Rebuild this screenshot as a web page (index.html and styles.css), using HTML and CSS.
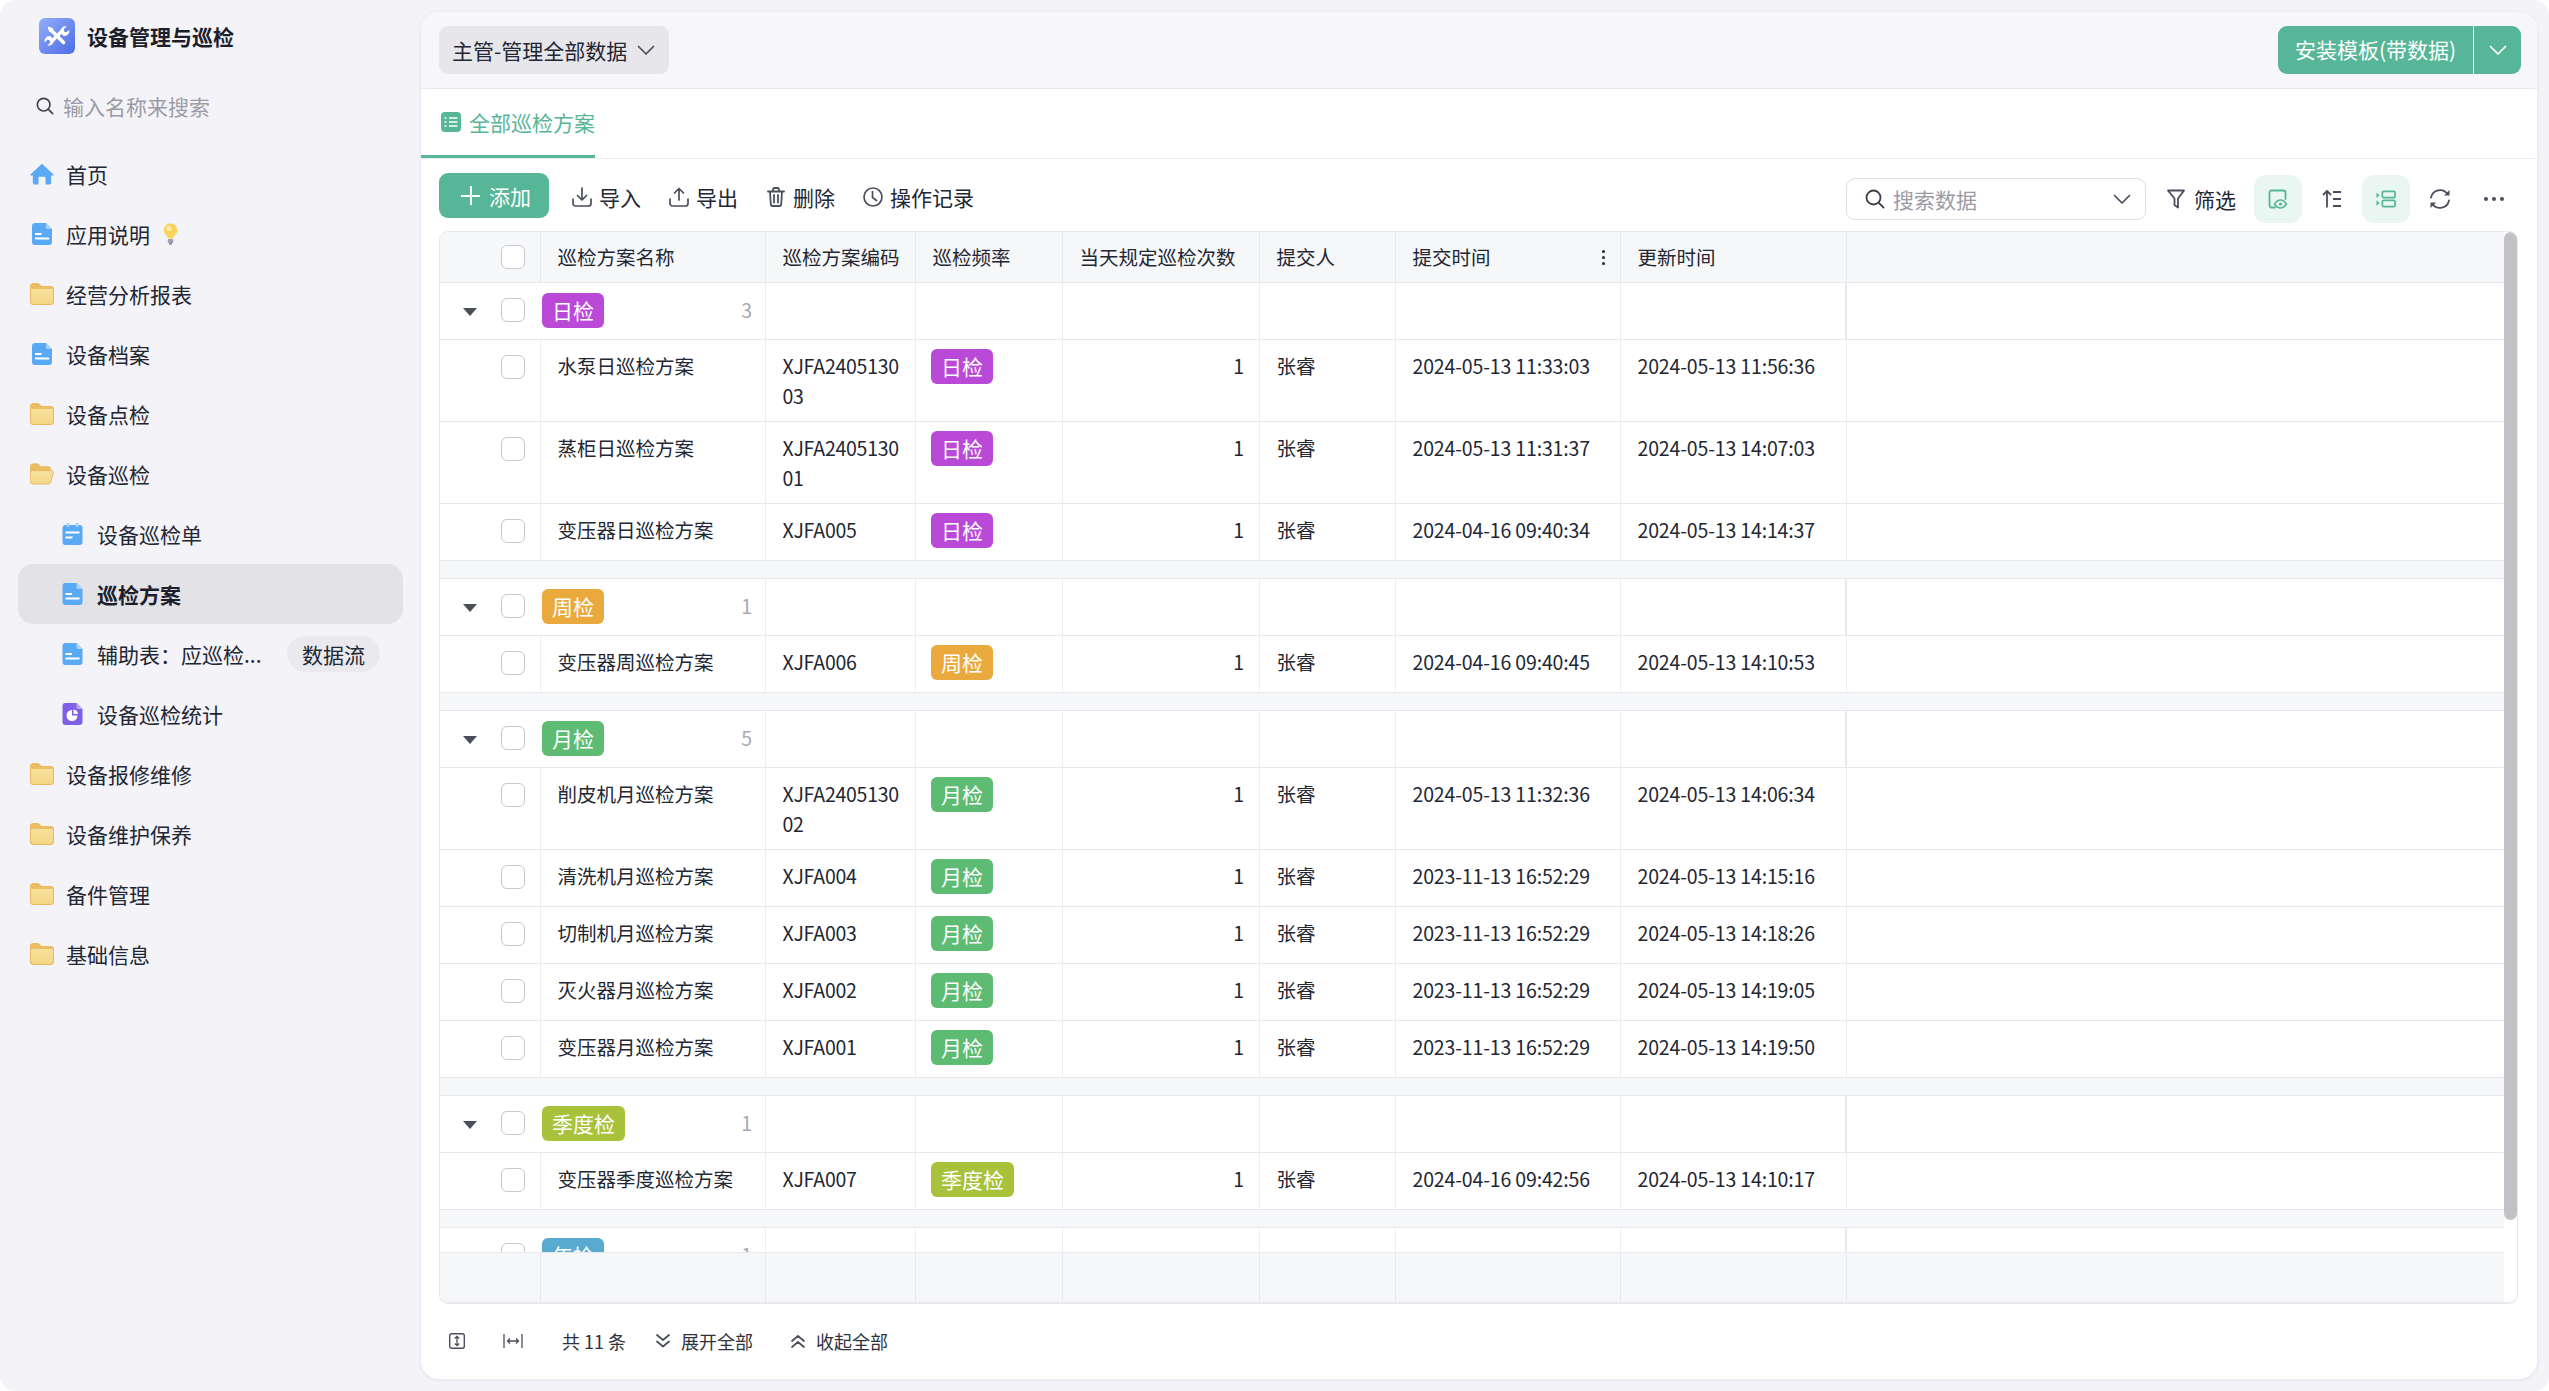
FILE: index.html
```html
<!DOCTYPE html>
<html lang="zh-CN">
<head>
    <meta charset="UTF-8">
    <title>巡检方案</title>
    <link rel="stylesheet" href="styles.css">
</head>
<body>

<svg class="sprites" aria-hidden="true">
    <defs>
        <linearGradient id="logoFill" x1="0" y1="0" x2="1" y2="1">
            <stop offset="0" stop-color="#93adfb"/>
            <stop offset="1" stop-color="#4d6ce6"/>
        </linearGradient>
        <linearGradient id="folderFill" x1="0" y1="0" x2="0" y2="1">
            <stop offset="0" stop-color="#f8e3a6"/>
            <stop offset="1" stop-color="#f5d683"/>
        </linearGradient>
    </defs>
    <symbol id="i-home" viewBox="0 0 22 20">
        <path d="M11 0.5 21.6 10.4c.4.4.1 1-.4 1H19.4V18a1.6 1.6 0 0 1-1.6 1.6H14.2V13.6a1 1 0 0 0-1-1H8.8a1 1 0 0 0-1 1v6H4.2A1.6 1.6 0 0 1 2.6 18V11.4H.8c-.5 0-.8-.6-.4-1z" fill="#5aa9f5"/>
    </symbol>
    <symbol id="i-doc" viewBox="0 0 20 22">
        <path d="M3 0h11l6 6v13a3 3 0 0 1-3 3H3a3 3 0 0 1-3-3V3a3 3 0 0 1 3-3z" fill="#5aa9f5"/>
        <path d="M14 0l6 6h-4.500a1.500 1.500 0 0 1-1.500-1.500z" fill="#a9d3fb"/>
        <rect x="3" y="10" width="6.500" height="2" fill="#fff"/>
        <rect x="3" y="14.500" width="14" height="2" fill="#fff"/>
    </symbol>
    <symbol id="i-form" viewBox="0 0 20 22">
        <rect x="0" y="2" width="20" height="20" rx="3" fill="#5aa9f5"/>
        <rect x="4" y="0" width="3" height="4" rx="1" fill="#a9d3fb"/>
        <rect x="13" y="0" width="3" height="4" rx="1" fill="#a9d3fb"/>
        <rect x="3" y="8.500" width="14" height="2" fill="#fff"/>
        <rect x="3" y="13.500" width="7" height="2" fill="#fff"/>
    </symbol>
    <symbol id="i-chart" viewBox="0 0 20 22">
        <path d="M3 0h11l6 6v13a3 3 0 0 1-3 3H3a3 3 0 0 1-3-3V3a3 3 0 0 1 3-3z" fill="#7e61e4"/>
        <path d="M14 0l6 6h-4.500a1.500 1.500 0 0 1-1.500-1.500z" fill="#b7a5f3"/>
        <path d="M9.500 7v5.500H15A5.500 5.500 0 1 1 9.500 7z" fill="#fff"/>
        <path d="M11 6.500a5 5 0 0 1 4.500 4.500H11z" fill="#fff"/>
    </symbol>
    <symbol id="i-folder" viewBox="0 0 24 22">
        <path d="M.5 3A2.500 2.500 0 0 1 3 .5h5.500l3 3H21A2.500 2.500 0 0 1 23.500 6v13a2.500 2.500 0 0 1-2.500 2.500H3A2.500 2.500 0 0 1 .5 19z" fill="url(#folderFill)" stroke="#e8b962"/>
        <path d="M.5 3A2.500 2.500 0 0 1 3 .5h5.500l3 3H21A2.500 2.500 0 0 1 23.500 6H.5z" fill="#edbd64"/>
    </symbol>
    <symbol id="i-folder-open" viewBox="0 0 25 22">
        <path d="M.5 3A2.500 2.500 0 0 1 3 .5h5.500l3 3H19A2.500 2.500 0 0 1 21.500 6v2H.5z" fill="#edbd64" stroke="#e8b962"/>
        <path d="M.5 19V9.500A2 2 0 0 1 2.500 7.500H22.300a2 2 0 0 1 1.900 2.500l-2.600 9.800a2.400 2.400 0 0 1-2.300 1.700H3A2.500 2.500 0 0 1 .5 19z" fill="url(#folderFill)" stroke="#e8b962"/>
    </symbol>
    <symbol id="i-search" viewBox="0 0 20 20">
        <circle cx="8.500" cy="8.500" r="7" fill="none" stroke="currentColor" stroke-width="1.800"/>
        <path d="M13.800 13.800 18.500 18.500" fill="none" stroke="currentColor" stroke-width="1.800" stroke-linecap="round"/>
    </symbol>
    <symbol id="i-chevron" viewBox="0 0 18 12">
        <path d="M1.500 2.500 9 10l7.500-7.500" fill="none" stroke="currentColor" stroke-width="1.700" stroke-linecap="round" stroke-linejoin="round"/>
    </symbol>
    <symbol id="i-import" viewBox="0 0 20 20">
        <path d="M10 1v11.500M5.500 8.500l4.500 4.500 4.500-4.500M1 12v4.500A2.500 2.500 0 0 0 3.500 19h13a2.500 2.500 0 0 0 2.500-2.500V12" fill="none" stroke="currentColor" stroke-width="1.700" stroke-linecap="round" stroke-linejoin="round"/>
    </symbol>
    <symbol id="i-export" viewBox="0 0 20 20">
        <path d="M10 13V1.500M5.500 6 10 1.500 14.500 6M1 12v4.500A2.500 2.500 0 0 0 3.500 19h13a2.500 2.500 0 0 0 2.500-2.500V12" fill="none" stroke="currentColor" stroke-width="1.700" stroke-linecap="round" stroke-linejoin="round"/>
    </symbol>
    <symbol id="i-trash" viewBox="0 0 18 20">
        <path d="M1 4.500h16M6 4.500V2.500A1.500 1.500 0 0 1 7.500 1h3A1.500 1.500 0 0 1 12 2.500v2M3 4.500l.8 12.500A2 2 0 0 0 5.800 19h6.400a2 2 0 0 0 2-2L15 4.500M7 8v7.500M11 8v7.500" fill="none" stroke="currentColor" stroke-width="1.800" stroke-linecap="round" stroke-linejoin="round"/>
    </symbol>
    <symbol id="i-clock" viewBox="0 0 20 20">
        <circle cx="10" cy="10" r="9" fill="none" stroke="currentColor" stroke-width="1.700"/>
        <path d="M9.500 4.500V10.500l4 3" fill="none" stroke="currentColor" stroke-width="1.700" stroke-linecap="round" stroke-linejoin="round"/>
    </symbol>
    <symbol id="i-filter" viewBox="0 0 18 20">
        <path d="M1 1.500h16l-6 8V18.500L7.500 16V9.500z" fill="none" stroke="currentColor" stroke-width="1.800" stroke-linejoin="round"/>
    </symbol>
    <symbol id="i-view" viewBox="0 0 20 20">
        <path d="M7 18.500H3.500a2 2 0 0 1-2-2v-13a2 2 0 0 1 2-2h12a2 2 0 0 1 2 2V10" fill="none" stroke="currentColor" stroke-width="1.800" stroke-linecap="round"/>
        <path d="M6.500 15c2-3 3.800-4 6-4s4 1 6 4c-2 3-3.800 4-6 4s-4-1-6-4z" fill="#e9f6f2" stroke="currentColor" stroke-width="1.600"/>
        <circle cx="12.500" cy="15" r="1.600" fill="currentColor"/>
    </symbol>
    <symbol id="i-sort" viewBox="0 0 20 20">
        <path d="M5 18.500V2M1 6l4-4 4 4M11 3h8M11 10h8M11 17h8" fill="none" stroke="currentColor" stroke-width="1.800" stroke-linejoin="round"/>
    </symbol>
    <symbol id="i-group" viewBox="0 0 22 20">
        <path d="M.5 3v6l3.500-3zM.5 11.500v6l3.500-3z" fill="currentColor"/>
        <rect x="7" y="1.500" width="14" height="7" rx="1.500" fill="none" stroke="currentColor" stroke-width="1.900"/>
        <rect x="7" y="11.500" width="14" height="7" rx="1.500" fill="none" stroke="currentColor" stroke-width="1.900"/>
    </symbol>
    <symbol id="i-refresh" viewBox="0 0 22 22">
        <path d="M2 9.500A9.200 9.200 0 0 1 18.500 6M20 12.500A9.200 9.200 0 0 1 3.500 16" fill="none" stroke="currentColor" stroke-width="1.800" stroke-linecap="round"/>
        <path d="M15 7.500h5.500V2zM7 14.500H1.500V20z" fill="currentColor"/>
    </symbol>
    <symbol id="i-rowheight" viewBox="0 0 16 16">
        <rect x=".7" y=".7" width="14.600" height="14.600" rx="2" fill="none" stroke="currentColor" stroke-width="1.400"/>
        <path d="M8 3.500v9M5.800 5.500 8 3.300l2.200 2.200M5.800 10.500 8 12.700l2.200-2.200" fill="none" stroke="currentColor" stroke-width="1.300"/>
    </symbol>
    <symbol id="i-colwidth" viewBox="0 0 20 16">
        <path d="M1 1v14M19 1v14M4.500 8h11M7 5.500 4.500 8 7 10.500M13 5.500 15.500 8 13 10.500" fill="none" stroke="currentColor" stroke-width="1.300"/>
    </symbol>
    <symbol id="i-down2" viewBox="0 0 16 16">
        <path d="M2 2l6 5 6-5M2 8.500l6 5 6-5" fill="none" stroke="currentColor" stroke-width="1.700" stroke-linecap="round" stroke-linejoin="round"/>
    </symbol>
    <symbol id="i-up2" viewBox="0 0 16 16">
        <path d="M2 8l6-5 6 5M2 14l6-5 6 5" fill="none" stroke="currentColor" stroke-width="1.700" stroke-linecap="round" stroke-linejoin="round"/>
    </symbol>
</svg>

<div class="app">
    <!-- Sidebar -->
    <aside class="sidebar">
        <div class="brand">
            <svg class="brand-logo" viewBox="0 0 36 36">
                <rect width="36" height="36" rx="6" fill="url(#logoFill)"/>
                <path d="M11.500 11.500 24.500 24.500" stroke="#fff" stroke-width="3.600" stroke-linecap="round"/>
                <path d="M9.500 9.500l4 1.500-2.500 2.500z" fill="#fff" stroke="#fff" stroke-width="1.500" stroke-linejoin="round"/>
                <path d="M24 12 12 24" stroke="#fff" stroke-width="3.600"/>
                <path d="M21.500 13.500a4.800 4.800 0 0 1 6-5l-2.800 2.800.6 2.400 2.400.6 2.500-2.600a4.800 4.800 0 0 1-6 6z" fill="#fff"/>
                <path d="M14.500 22.500a4.800 4.800 0 0 1-6 5l2.800-2.800-.6-2.400-2.400-.6-2.500 2.600a4.800 4.800 0 0 1 6-6z" fill="#fff"/>
            </svg>
            <span>设备管理与巡检</span>
        </div>
        <div class="side-search">
            <svg class="icon-18"><use href="#i-search"/></svg>
            <span>输入名称来搜索</span>
        </div>
        <nav class="nav">
            <a class="nav-item"><svg class="nav-icon"><use href="#i-home"/></svg>首页</a>
            <a class="nav-item"><svg class="nav-icon"><use href="#i-doc"/></svg>应用说明
                <svg class="bulb" viewBox="0 0 15 22">
                    <path d="M7.500.5a6.800 6.800 0 0 1 4.200 12.100c-.9.800-1.300 1.500-1.400 2.900H4.700c-.1-1.400-.5-2.100-1.400-2.900A6.800 6.800 0 0 1 7.500.5z" fill="#f9d35c"/>
                    <circle cx="6" cy="5.500" r="2.500" fill="#fdeeb0"/>
                    <rect x="4.800" y="16" width="5.400" height="4" rx="1" fill="#a99ab5"/>
                    <rect x="6" y="20" width="3" height="1.500" fill="#8b7d99"/>
                </svg>
            </a>
            <a class="nav-item"><svg class="nav-icon"><use href="#i-folder"/></svg>经营分析报表</a>
            <a class="nav-item"><svg class="nav-icon"><use href="#i-doc"/></svg>设备档案</a>
            <a class="nav-item"><svg class="nav-icon"><use href="#i-folder"/></svg>设备点检</a>
            <a class="nav-item"><svg class="nav-icon"><use href="#i-folder-open"/></svg>设备巡检</a>
            <a class="nav-item nav-child"><svg class="nav-icon"><use href="#i-form"/></svg>设备巡检单</a>
            <a class="nav-item nav-child active"><svg class="nav-icon"><use href="#i-doc"/></svg>巡检方案</a>
            <a class="nav-item nav-child"><svg class="nav-icon"><use href="#i-doc"/></svg><span class="nav-ellipsis">辅助表：应巡检...</span><span class="nav-badge">数据流</span></a>
            <a class="nav-item nav-child"><svg class="nav-icon"><use href="#i-chart"/></svg>设备巡检统计</a>
            <a class="nav-item"><svg class="nav-icon"><use href="#i-folder"/></svg>设备报修维修</a>
            <a class="nav-item"><svg class="nav-icon"><use href="#i-folder"/></svg>设备维护保养</a>
            <a class="nav-item"><svg class="nav-icon"><use href="#i-folder"/></svg>备件管理</a>
            <a class="nav-item"><svg class="nav-icon"><use href="#i-folder"/></svg>基础信息</a>
        </nav>
    </aside>

    <!-- Main card -->
    <main class="main">
        <div class="topbar">
            <button class="view-select">主管-管理全部数据<svg class="icon-chevron"><use href="#i-chevron"/></svg></button>
            <div class="install">
                <span class="install-label">安装模板(带数据)</span>
                <span class="install-more"><svg class="icon-chevron"><use href="#i-chevron"/></svg></span>
            </div>
        </div>

        <div class="tabs">
            <div class="tab">
                <svg class="tab-icon" viewBox="0 0 20 20">
                    <rect width="20" height="20" rx="4" fill="currentColor"/>
                    <path d="M3.500 6h2M8 6h8.500M3.500 10h2M8 10h8.500M3.500 14h2M8 14h8.500" stroke="#fff" stroke-width="1.600"/>
                </svg>
                全部巡检方案
            </div>
        </div>

        <div class="toolbar">
            <div class="toolbar-left">
                <button class="btn-add"><span class="btn-plus"></span>添加</button>
                <a class="tool"><svg class="icon-20"><use href="#i-import"/></svg>导入</a>
                <a class="tool"><svg class="icon-20"><use href="#i-export"/></svg>导出</a>
                <a class="tool"><svg class="icon-20"><use href="#i-trash"/></svg>删除</a>
                <a class="tool"><svg class="icon-20"><use href="#i-clock"/></svg>操作记录</a>
            </div>
            <div class="toolbar-right">
                <div class="data-search">
                    <svg class="icon-20"><use href="#i-search"/></svg>
                    <span class="data-search-text">搜索数据</span>
                    <svg class="icon-chevron"><use href="#i-chevron"/></svg>
                </div>
                <a class="tool tool-filter"><svg class="icon-20"><use href="#i-filter"/></svg>筛选</a>
                <a class="icon-btn on"><svg class="icon-20"><use href="#i-view"/></svg></a>
                <a class="icon-btn"><svg class="icon-20"><use href="#i-sort"/></svg></a>
                <a class="icon-btn on"><svg class="icon-20"><use href="#i-group"/></svg></a>
                <a class="icon-btn"><svg class="icon-22"><use href="#i-refresh"/></svg></a>
                <a class="icon-btn"><span class="dots"></span></a>
            </div>
        </div>

        <div class="table">
            <div class="scrollbar"></div>
            <div class="tr thead">
                <div class="td col-check"><span class="checkbox"></span></div>
                <div class="td">巡检方案名称</div>
                <div class="td">巡检方案编码</div>
                <div class="td">巡检频率</div>
                <div class="td">当天规定巡检次数</div>
                <div class="td">提交人</div>
                <div class="td td-menu">提交时间<span class="kebab"></span></div>
                <div class="td">更新时间</div>
                <div class="td"></div>
            </div>

            <div class="tbody">
                <!-- 日检 -->
                <div class="tr group">
                    <div class="td col-check"><span class="caret"></span><span class="checkbox"></span></div>
                    <div class="td td-group"><span class="tag tag-day">日检</span><span class="count">3</span></div>
                    <div class="td"></div><div class="td"></div><div class="td"></div><div class="td"></div><div class="td"></div><div class="td td-end"></div><div class="td"></div>
                </div>
                <div class="tr row-tall">
                    <div class="td col-check"><span class="checkbox"></span></div>
                    <div class="td">水泵日巡检方案</div>
                    <div class="td td-code">XJFA240513003</div>
                    <div class="td td-tag"><span class="tag tag-day">日检</span></div>
                    <div class="td td-num">1</div>
                    <div class="td">张睿</div>
                    <div class="td td-time">2024-05-13 11:33:03</div>
                    <div class="td td-time">2024-05-13 11:56:36</div>
                    <div class="td"></div>
                </div>
                <div class="tr row-tall">
                    <div class="td col-check"><span class="checkbox"></span></div>
                    <div class="td">蒸柜日巡检方案</div>
                    <div class="td td-code">XJFA240513001</div>
                    <div class="td td-tag"><span class="tag tag-day">日检</span></div>
                    <div class="td td-num">1</div>
                    <div class="td">张睿</div>
                    <div class="td td-time">2024-05-13 11:31:37</div>
                    <div class="td td-time">2024-05-13 14:07:03</div>
                    <div class="td"></div>
                </div>
                <div class="tr">
                    <div class="td col-check"><span class="checkbox"></span></div>
                    <div class="td">变压器日巡检方案</div>
                    <div class="td td-code">XJFA005</div>
                    <div class="td td-tag"><span class="tag tag-day">日检</span></div>
                    <div class="td td-num">1</div>
                    <div class="td">张睿</div>
                    <div class="td td-time">2024-04-16 09:40:34</div>
                    <div class="td td-time">2024-05-13 14:14:37</div>
                    <div class="td"></div>
                </div>
                <div class="group-gap"></div>

                <!-- 周检 -->
                <div class="tr group">
                    <div class="td col-check"><span class="caret"></span><span class="checkbox"></span></div>
                    <div class="td td-group"><span class="tag tag-week">周检</span><span class="count">1</span></div>
                    <div class="td"></div><div class="td"></div><div class="td"></div><div class="td"></div><div class="td"></div><div class="td td-end"></div><div class="td"></div>
                </div>
                <div class="tr">
                    <div class="td col-check"><span class="checkbox"></span></div>
                    <div class="td">变压器周巡检方案</div>
                    <div class="td td-code">XJFA006</div>
                    <div class="td td-tag"><span class="tag tag-week">周检</span></div>
                    <div class="td td-num">1</div>
                    <div class="td">张睿</div>
                    <div class="td td-time">2024-04-16 09:40:45</div>
                    <div class="td td-time">2024-05-13 14:10:53</div>
                    <div class="td"></div>
                </div>
                <div class="group-gap"></div>

                <!-- 月检 -->
                <div class="tr group">
                    <div class="td col-check"><span class="caret"></span><span class="checkbox"></span></div>
                    <div class="td td-group"><span class="tag tag-month">月检</span><span class="count">5</span></div>
                    <div class="td"></div><div class="td"></div><div class="td"></div><div class="td"></div><div class="td"></div><div class="td td-end"></div><div class="td"></div>
                </div>
                <div class="tr row-tall">
                    <div class="td col-check"><span class="checkbox"></span></div>
                    <div class="td">削皮机月巡检方案</div>
                    <div class="td td-code">XJFA240513002</div>
                    <div class="td td-tag"><span class="tag tag-month">月检</span></div>
                    <div class="td td-num">1</div>
                    <div class="td">张睿</div>
                    <div class="td td-time">2024-05-13 11:32:36</div>
                    <div class="td td-time">2024-05-13 14:06:34</div>
                    <div class="td"></div>
                </div>
                <div class="tr">
                    <div class="td col-check"><span class="checkbox"></span></div>
                    <div class="td">清洗机月巡检方案</div>
                    <div class="td td-code">XJFA004</div>
                    <div class="td td-tag"><span class="tag tag-month">月检</span></div>
                    <div class="td td-num">1</div>
                    <div class="td">张睿</div>
                    <div class="td td-time">2023-11-13 16:52:29</div>
                    <div class="td td-time">2024-05-13 14:15:16</div>
                    <div class="td"></div>
                </div>
                <div class="tr">
                    <div class="td col-check"><span class="checkbox"></span></div>
                    <div class="td">切制机月巡检方案</div>
                    <div class="td td-code">XJFA003</div>
                    <div class="td td-tag"><span class="tag tag-month">月检</span></div>
                    <div class="td td-num">1</div>
                    <div class="td">张睿</div>
                    <div class="td td-time">2023-11-13 16:52:29</div>
                    <div class="td td-time">2024-05-13 14:18:26</div>
                    <div class="td"></div>
                </div>
                <div class="tr">
                    <div class="td col-check"><span class="checkbox"></span></div>
                    <div class="td">灭火器月巡检方案</div>
                    <div class="td td-code">XJFA002</div>
                    <div class="td td-tag"><span class="tag tag-month">月检</span></div>
                    <div class="td td-num">1</div>
                    <div class="td">张睿</div>
                    <div class="td td-time">2023-11-13 16:52:29</div>
                    <div class="td td-time">2024-05-13 14:19:05</div>
                    <div class="td"></div>
                </div>
                <div class="tr">
                    <div class="td col-check"><span class="checkbox"></span></div>
                    <div class="td">变压器月巡检方案</div>
                    <div class="td td-code">XJFA001</div>
                    <div class="td td-tag"><span class="tag tag-month">月检</span></div>
                    <div class="td td-num">1</div>
                    <div class="td">张睿</div>
                    <div class="td td-time">2023-11-13 16:52:29</div>
                    <div class="td td-time">2024-05-13 14:19:50</div>
                    <div class="td"></div>
                </div>
                <div class="group-gap"></div>

                <!-- 季度检 -->
                <div class="tr group">
                    <div class="td col-check"><span class="caret"></span><span class="checkbox"></span></div>
                    <div class="td td-group"><span class="tag tag-quarter">季度检</span><span class="count">1</span></div>
                    <div class="td"></div><div class="td"></div><div class="td"></div><div class="td"></div><div class="td"></div><div class="td td-end"></div><div class="td"></div>
                </div>
                <div class="tr">
                    <div class="td col-check"><span class="checkbox"></span></div>
                    <div class="td">变压器季度巡检方案</div>
                    <div class="td td-code">XJFA007</div>
                    <div class="td td-tag"><span class="tag tag-quarter">季度检</span></div>
                    <div class="td td-num">1</div>
                    <div class="td">张睿</div>
                    <div class="td td-time">2024-04-16 09:42:56</div>
                    <div class="td td-time">2024-05-13 14:10:17</div>
                    <div class="td"></div>
                </div>
                <div class="group-gap"></div>

                <!-- 年检, cut off by the summary row -->
                <div class="tr group">
                    <div class="td col-check"><span class="caret"></span><span class="checkbox"></span></div>
                    <div class="td td-group"><span class="tag tag-year">年检</span><span class="count">1</span></div>
                    <div class="td"></div><div class="td"></div><div class="td"></div><div class="td"></div><div class="td"></div><div class="td td-end"></div><div class="td"></div>
                </div>
            </div>

            <div class="tr tfoot">
                <div class="td col-check"></div>
                <div class="td"></div><div class="td"></div><div class="td"></div><div class="td"></div><div class="td"></div><div class="td"></div><div class="td"></div><div class="td"></div>
            </div>
        </div>

        <div class="pager">
            <svg class="pager-icon"><use href="#i-rowheight"/></svg>
            <svg class="pager-icon-wide"><use href="#i-colwidth"/></svg>
            <span class="pager-total">共 11 条</span>
            <a class="pager-link"><svg class="pager-icon"><use href="#i-down2"/></svg>展开全部</a>
            <a class="pager-link"><svg class="pager-icon"><use href="#i-up2"/></svg>收起全部</a>
        </div>
    </main>
</div>

</body>
</html>
```

FILE: styles.css
```css
* {
    box-sizing: border-box;
}
body {
    margin: 0;
    height: 100vh;
    overflow: hidden;
    background-color: #ffffff;
    font-family: "Noto Sans CJK SC", "Noto Sans", sans-serif;
    font-size: 21px;
    color: #232733;
}
a {
    color: inherit;
    text-decoration: none;
}
button {
    font-family: inherit;
    border: none;
}
.sprites {
    position: absolute;
    width: 0;
    height: 0;
}
.app {
    display: flex;
    height: 100%;
    background-color: #f3f3f8;
    border-radius: 15px;
    overflow: hidden;
}

/* Sidebar */
.sidebar {
    width: 421px;
    flex-shrink: 0;
    padding-top: 18px;
}
.brand {
    display: flex;
    align-items: center;
    gap: 12px;
    height: 36px;
    margin-left: 39px;
    font-weight: bold;
    color: #1c1f2b;
}
.brand-logo {
    width: 36px;
    height: 36px;
}
.side-search {
    display: flex;
    align-items: center;
    gap: 9px;
    height: 36px;
    margin: 34px 0 20px 36px;
    color: #9b9ba6;
}
.side-search svg {
    color: #3d404c;
}
.icon-18 {
    width: 18px;
    height: 18px;
}
.nav-item {
    display: flex;
    align-items: center;
    height: 60px;
    margin: 0 18px;
    padding-left: 12px;
    border-radius: 15px;
}
.nav-icon {
    width: 24px;
    height: 22px;
    margin-right: 12px;
    flex-shrink: 0;
}
.nav-child {
    padding-left: 44px;
}
.nav-child .nav-icon {
    width: 21px;
    margin-right: 14px;
}
.nav-item.active {
    background-color: #e2e2e7;
    font-weight: bold;
    color: #1c1f2b;
}
.bulb {
    width: 15px;
    height: 22px;
    margin-left: 13px;
}
.nav-ellipsis {
    width: 190px;
    white-space: nowrap;
}
.nav-badge {
    height: 36px;
    line-height: 36px;
    padding: 0 15px;
    border-radius: 18px;
    background-color: #e9e9ee;
}

/* Main card */
.main {
    flex: 1;
    min-width: 0;
    display: flex;
    flex-direction: column;
    margin: 12px 12px 12px 0;
    background-color: #ffffff;
    border-radius: 18px;
    box-shadow: 0 1px 4px rgba(30, 30, 60, 0.08);
    overflow: hidden;
}
.topbar {
    display: flex;
    justify-content: space-between;
    align-items: center;
    flex-shrink: 0;
    height: 77px;
    padding: 0 16px 1px 18px;
    background-color: #f6f6fb;
    border-bottom: 1px solid #e8e8ee;
}
.view-select {
    display: flex;
    align-items: center;
    width: 230px;
    height: 48px;
    padding: 0 0 0 13px;
    border-radius: 9px;
    background-color: #e6e6eb;
    font-size: 21px;
    color: #232733;
    white-space: nowrap;
}
.icon-chevron {
    width: 18px;
    height: 12px;
    margin-left: 10px;
    color: #4a4e5c;
}
.install {
    display: flex;
    height: 48px;
    border-radius: 9px;
    overflow: hidden;
    background-color: #57b697;
    color: #ffffff;
}
.install-label {
    width: 196px;
    line-height: 46px;
    text-align: center;
    white-space: nowrap;
    border-right: 1px solid #ffffff;
}
.install-more {
    display: flex;
    align-items: center;
    justify-content: center;
    width: 47px;
}
.install-more .icon-chevron {
    margin: 0;
    color: #ffffff;
}

.tabs {
    flex-shrink: 0;
    height: 70px;
    border-bottom: 1px solid #eeeef2;
}
.tab {
    display: flex;
    align-items: center;
    gap: 8px;
    width: 174px;
    height: 69px;
    padding: 0 0 1px 20px;
    border-bottom: 3px solid #57b697;
    color: #57b697;
    white-space: nowrap;
}
.tab-icon {
    width: 20px;
    height: 20px;
}

.toolbar {
    display: flex;
    justify-content: space-between;
    flex-shrink: 0;
    height: 72px;
    padding: 14px 19px 0 18px;
}
.toolbar-left {
    display: flex;
    align-items: flex-start;
    gap: 28px;
}
.toolbar-right {
    display: flex;
    align-items: center;
    height: 48px;
    margin-top: 2px;
    gap: 6px;
}
.btn-add {
    display: flex;
    align-items: center;
    width: 110px;
    height: 45px;
    margin-right: -5px;
    padding-left: 22px;
    border-radius: 9px;
    background-color: #57b697;
    color: #ffffff;
    font-size: 21px;
}
.btn-plus {
    width: 19px;
    height: 19px;
    margin-right: 9px;
    background:
        linear-gradient(#fff, #fff) center / 100% 2px no-repeat,
        linear-gradient(#fff, #fff) center / 2px 100% no-repeat;
}
.tool {
    display: flex;
    align-items: center;
    gap: 7px;
    height: 48px;
    white-space: nowrap;
}
.tool svg {
    color: #4a4e5c;
}
.icon-20 {
    width: 20px;
    height: 20px;
    flex-shrink: 0;
}
.icon-22 {
    width: 22px;
    height: 22px;
}
.data-search {
    display: flex;
    align-items: center;
    width: 300px;
    height: 42px;
    margin-right: 14px;
    padding: 0 14px 0 18px;
    border: 1px solid #dcdce4;
    border-radius: 9px;
    color: #9b9ba6;
}
.data-search svg:first-child {
    color: #3d404c;
    margin-right: 8px;
}
.data-search-text {
    flex: 1;
}
.tool-filter {
    margin: 0 12px 0 0;
    gap: 8px;
}
.icon-btn {
    display: flex;
    align-items: center;
    justify-content: center;
    width: 48px;
    height: 48px;
    border-radius: 12px;
    color: #4a4e5c;
}
.icon-btn.on {
    background-color: #e9f6f2;
    color: #57b697;
}
.dots {
    width: 4px;
    height: 4px;
    border-radius: 50%;
    background-color: #4a4e5c;
    box-shadow: -8px 0 0 #4a4e5c, 8px 0 0 #4a4e5c;
}

/* Table */
.table {
    position: relative;
    flex: 1;
    min-height: 0;
    display: flex;
    flex-direction: column;
    margin: 0 19px 0 18px;
    padding-right: 13px;
    border: 1px solid #e8e8ee;
    border-bottom-width: 2px;
    border-radius: 9px;
    overflow: hidden;
    font-size: 19.5px;
    line-height: 30px;
}
.scrollbar {
    position: absolute;
    top: 0;
    right: 0;
    z-index: 2;
    width: 13px;
    height: 988px;
    border-radius: 7px;
    background-color: #c1c1c6;
}
.tr {
    display: grid;
    grid-template-columns: 101px 225px 150px 147px 197px 136px 225px 226px 1fr;
    flex-shrink: 0;
    height: 57px;
    border-bottom: 1px solid #e8e8ee;
}
.row-tall {
    height: 82px;
}
.td {
    min-width: 0;
    padding: 11px 15px 0 16.5px;
    border-right: 1px solid #eeeef2;
}
.td:last-child {
    border-right: none;
}
.thead {
    height: 51px;
    background-color: #f6f7f9;
}
.thead .td {
    padding-top: 10px;
    border-right-color: #e8e8ee;
}
.tbody {
    flex: 1;
    min-height: 0;
    overflow: hidden;
}
.tfoot {
    height: 50px;
    border-top: 1px solid #e8e8ee;
    border-bottom: none;
    background-color: #f6f7f9;
}
.tfoot .td {
    border-right-color: #e8e8ee;
}
.td.col-check {
    position: relative;
    padding: 15px 0 0 61px;
}
.thead .td.col-check {
    padding-top: 13px;
}
.checkbox {
    display: block;
    width: 24px;
    height: 24px;
    border: 1.5px solid #c8c8d2;
    border-radius: 6px;
    background-color: #ffffff;
}
.caret {
    position: absolute;
    left: 23px;
    top: 25px;
    border-left: 7px solid transparent;
    border-right: 7px solid transparent;
    border-top: 8px solid #4a4e5a;
}
.group .td.col-check {
    border-right: none;
}
.td-group {
    display: flex;
    justify-content: space-between;
    padding: 10px 13px 0 1px;
}
.td-end {
    border-right: 2px solid #e8e8ee;
}
.td-code {
    padding-right: 10px;
    letter-spacing: -0.25px;
    word-break: break-all;
}
.td-time {
    letter-spacing: -0.15px;
    white-space: nowrap;
}
.td-num {
    text-align: right;
}
.td-menu {
    position: relative;
}
.kebab {
    position: absolute;
    right: 15px;
    top: 18px;
    width: 3px;
    height: 3px;
    border-radius: 50%;
    background-color: #232733;
    box-shadow: 0 6px 0 #232733, 0 12px 0 #232733;
}
.td-tag {
    padding-top: 9px;
    padding-left: 15px;
}
.tag {
    display: inline-block;
    height: 35px;
    padding: 0 10px;
    border-radius: 6px;
    font-size: 21px;
    line-height: 34px;
    color: #ffffff;
    white-space: nowrap;
}
.tag-day {
    background-color: #bb49d8;
}
.tag-week {
    background-color: #e9a93c;
}
.tag-month {
    background-color: #5dbb74;
}
.tag-quarter {
    background-color: #a8c23b;
}
.tag-year {
    background-color: #58aacf;
}
.count {
    margin-top: 2px;
    font-size: 19.5px;
    color: #a8a8b2;
}
.group-gap {
    height: 18px;
    background-color: #f6f7f9;
    border-bottom: 1px solid #e8e8ee;
}

/* Footer */
.pager {
    display: flex;
    align-items: center;
    flex-shrink: 0;
    height: 75px;
    padding: 0 0 2px 28px;
    font-size: 18px;
    color: #2f323e;
}
.pager-icon {
    width: 16px;
    height: 16px;
    color: #4a4e5c;
}
.pager-icon-wide {
    width: 20px;
    height: 16px;
    margin-left: 38px;
    color: #4a4e5c;
}
.pager-total {
    margin: 0 29px 0 39px;
}
.pager-link {
    display: flex;
    align-items: center;
    gap: 10px;
    margin-right: 37px;
}
```
